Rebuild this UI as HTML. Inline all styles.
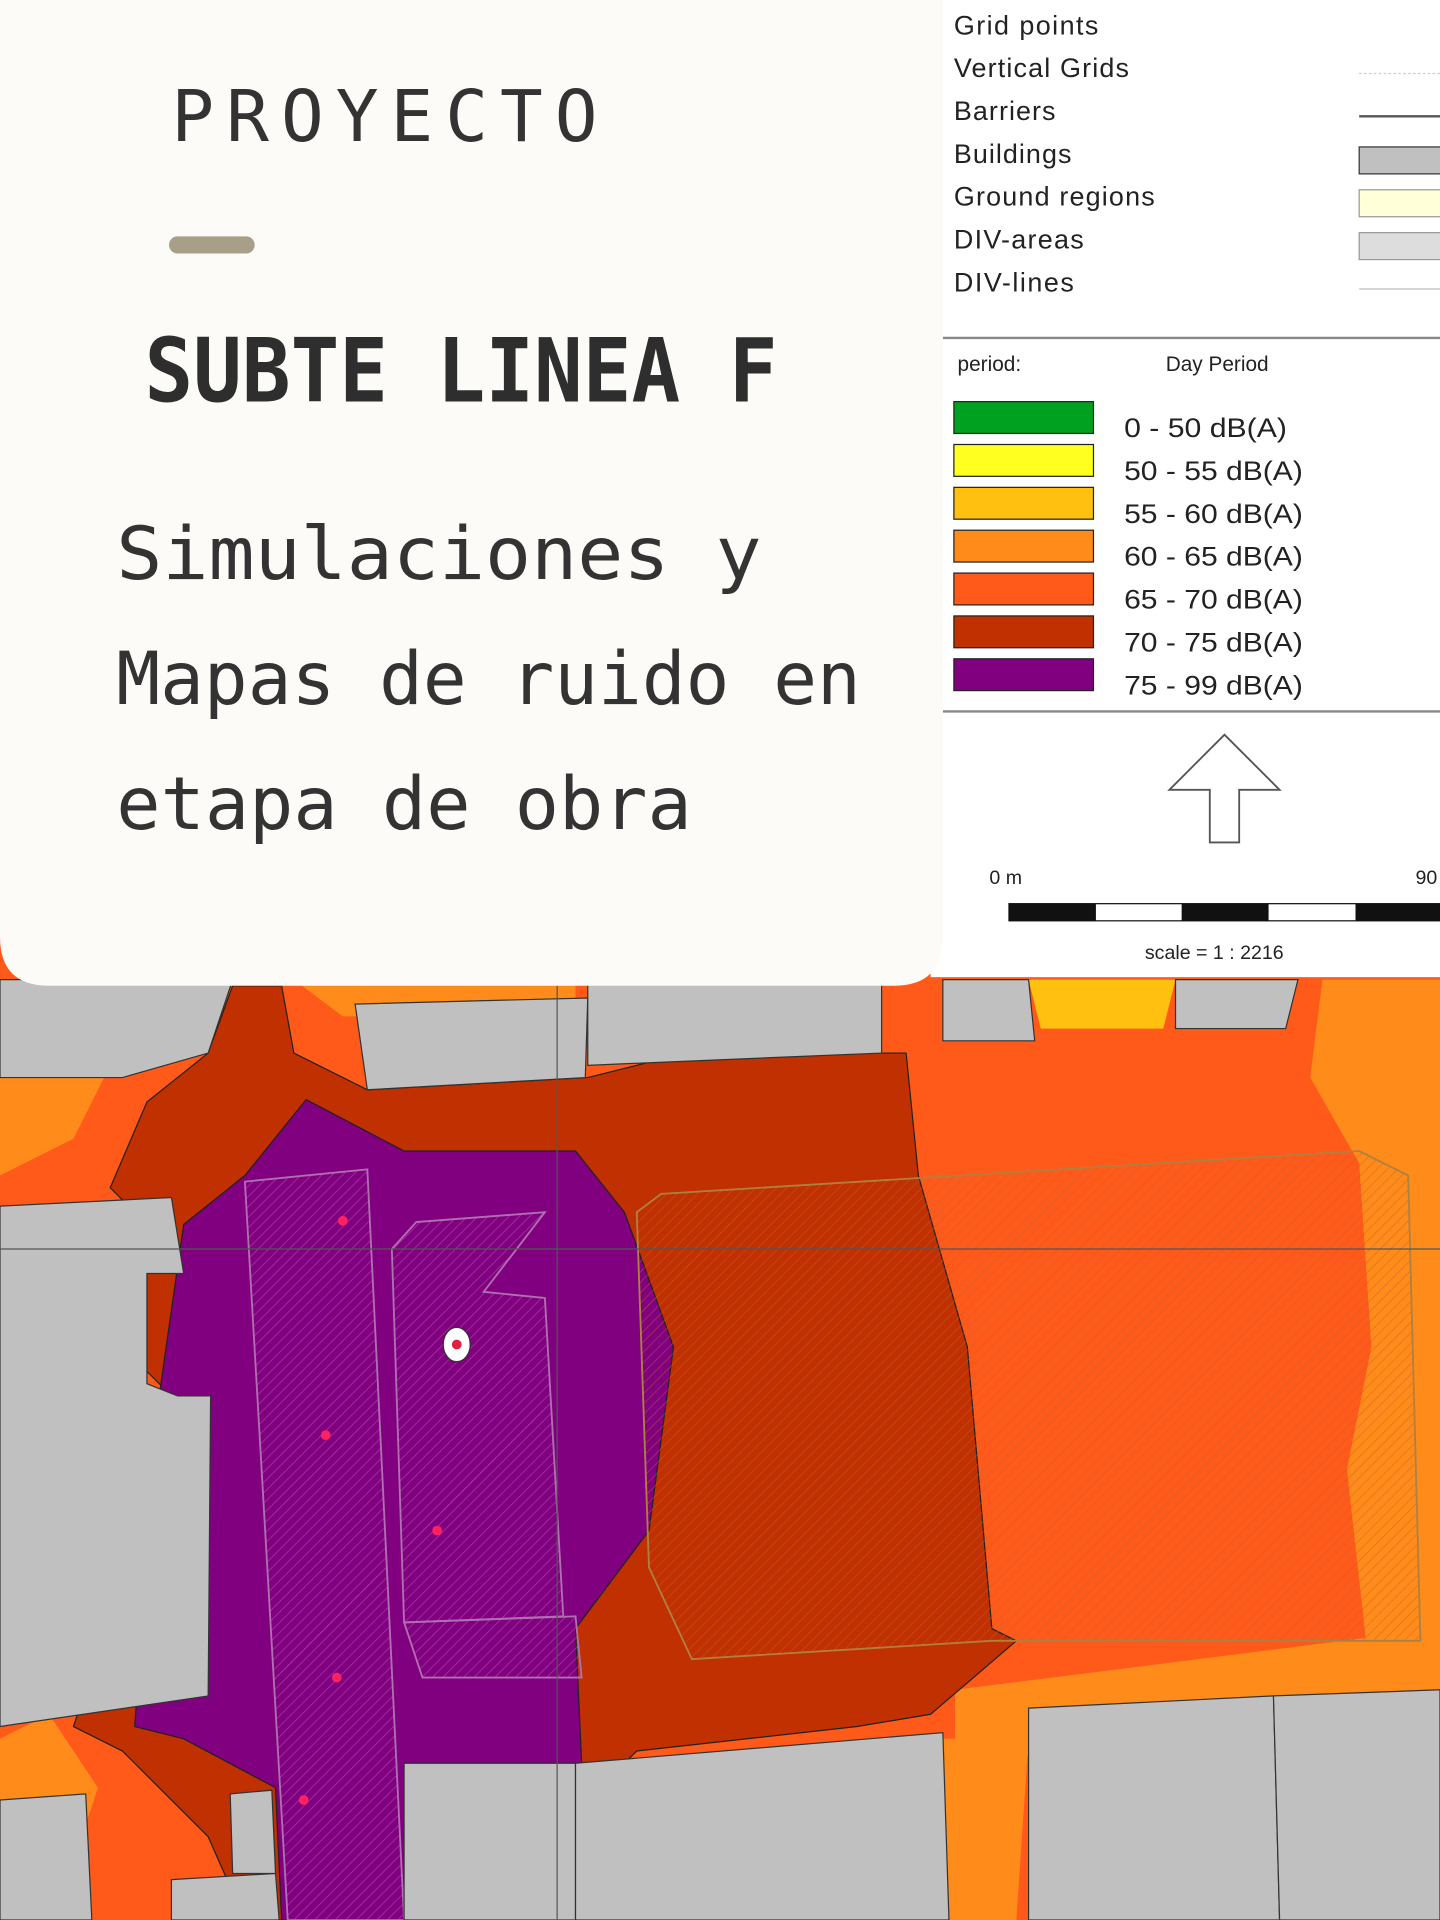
<!DOCTYPE html>
<html><head><meta charset="utf-8"><style>
html,body{margin:0;padding:0;width:1440px;height:1920px;overflow:hidden;background:#c0c0c0}
svg{display:block}
</style></head><body>
<svg width="1440" height="1920" viewBox="0 0 1176 1568" xmlns="http://www.w3.org/2000/svg">
<defs>
<pattern id="h" width="6" height="6" patternUnits="userSpaceOnUse" patternTransform="rotate(45)"><line x1="0" y1="0" x2="0" y2="6" stroke="#c06030" stroke-width="1.2" opacity="0.6"/></pattern>
<pattern id="hp" width="6" height="6" patternUnits="userSpaceOnUse" patternTransform="rotate(45)"><line x1="0" y1="0" x2="0" y2="6" stroke="#c060c0" stroke-width="1.2" opacity="0.6"/></pattern>
</defs>
<rect width="1176" height="1568" fill="#ff5a1a"/>
<polygon points="0,880 90,870 60,930 0,960" fill="#ff8c1a"/>
<polygon points="1080,800 1176,800 1176,1400 1120,1380 1100,1200 1120,1100 1110,950 1070,880" fill="#ff8c1a"/>
<polygon points="0,1420 40,1400 80,1460 60,1520 0,1520" fill="#ff8c1a"/>
<polygon points="770,1420 840,1420 830,1568 770,1568" fill="#ff8c1a"/>
<polygon points="240,800 470,800 470,830 280,830" fill="#ff8c1a"/>
<polygon points="840,800 960,800 950,840 850,840" fill="#ffc010"/>
<polygon points="780,1380 1176,1330 1176,1400 780,1440" fill="#ff8c1a"/>
<polygon points="190,805 230,805 240,860 300,890 480,880 560,860 740,860 750,960 790,1100 810,1330 830,1340 760,1400 700,1410 520,1430 480,1470 470,1568 200,1568 170,1500 100,1430 60,1410 70,1380 120,1380 140,1140 120,1120 120,1040 100,980 90,970 120,900 170,860" fill="#c03000" stroke="#222" stroke-width="1"/>
<polygon points="250,898 330,940 470,940 510,990 550,1100 530,1250 470,1330 475,1440 330,1440 330,1568 230,1568 225,1460 150,1420 110,1410 130,1140 150,1000 200,960" fill="#800080" stroke="#222" stroke-width="1"/>
<polygon points="200,965 300,955 330,1568 235,1568" fill="url(#hp)" stroke="#b070b0" stroke-width="1.5"/>
<polygon points="320,1020 340,998 445,990 395,1055 445,1060 460,1320 330,1325" fill="url(#hp)" stroke="#b070b0" stroke-width="1.5"/>
<polygon points="330,1325 470,1320 475,1370 345,1370" fill="url(#hp)" stroke="#b070b0" stroke-width="1.5"/>
<polygon points="520,990 540,975 1110,940 1150,960 1160,1340 810,1340 565,1355 530,1280" fill="url(#h)" stroke="#b08040" stroke-width="1.5"/>
<g fill="#c0c0c0" stroke="#333" stroke-width="1">
<polygon points="0,800 190,800 170,860 100,880 0,880"/>
<polygon points="290,820 480,815 478,880 300,890"/>
<polygon points="480,800 720,800 720,860 480,870"/>
<polygon points="770,800 840,800 845,850 770,850"/>
<polygon points="960,800 1060,800 1050,840 960,840"/>
<polygon points="0,985 140,978 150,1040 120,1040 120,1130 145,1140 172,1140 170,1385 0,1410"/>
<polygon points="0,1470 70,1465 75,1568 0,1568"/>
<polygon points="330,1440 470,1440 470,1568 330,1568"/>
<polygon points="470,1440 770,1415 775,1568 470,1568"/>
<polygon points="840,1395 1040,1385 1045,1568 840,1568"/>
<polygon points="1040,1385 1176,1380 1176,1568 1045,1568"/>
<polygon points="188,1465 222,1462 225,1530 190,1530"/>
<polygon points="140,1535 225,1530 228,1568 140,1568"/>
</g>
<line x1="0" y1="1020" x2="1176" y2="1020" stroke="#555" stroke-width="1"/>
<line x1="455" y1="800" x2="455" y2="1568" stroke="#555" stroke-width="1"/>
<g fill="#ff2060"><circle cx="280" cy="997" r="4"/><circle cx="266" cy="1172" r="4"/><circle cx="357" cy="1250" r="4"/><circle cx="275" cy="1370" r="4"/><circle cx="248" cy="1470" r="4"/></g>
<ellipse cx="373" cy="1098" rx="11" ry="14" fill="#fff" stroke="#333"/><circle cx="373" cy="1098" r="4" fill="#e02040"/>
<rect x="760" y="0" width="416" height="798" fill="#fff"/>
<g font-family="Liberation Sans, sans-serif" font-size="22" fill="#222" lengthAdjust="spacingAndGlyphs">
<text x="779" y="28" textLength="118">Grid points</text><text x="779" y="63" textLength="143">Vertical Grids</text><text x="779" y="98" textLength="83">Barriers</text><text x="779" y="133" textLength="96">Buildings</text><text x="779" y="168" textLength="164">Ground regions</text><text x="779" y="203" textLength="106">DIV-areas</text><text x="779" y="238" textLength="98">DIV-lines</text>
</g>
<line x1="1110" y1="95" x2="1176" y2="95" stroke="#555" stroke-width="2"/>
<rect x="1110" y="120" width="70" height="22" fill="#c0c0c0" stroke="#333"/>
<rect x="1110" y="155" width="70" height="22" fill="#ffffd8" stroke="#999"/>
<rect x="1110" y="190" width="70" height="22" fill="#ddd" stroke="#999"/>
<line x1="1110" y1="236" x2="1176" y2="236" stroke="#bbb"/>
<line x1="1110" y1="60" x2="1176" y2="60" stroke="#ccc" stroke-dasharray="2,2"/>
<line x1="770" y1="276" x2="1176" y2="276" stroke="#888" stroke-width="2"/>
<text x="782" y="303" font-family="Liberation Sans, sans-serif" font-size="17" fill="#222">period:</text>
<text x="952" y="303" font-family="Liberation Sans, sans-serif" font-size="17" fill="#222">Day Period</text>
<g stroke="#222" stroke-width="1">
<rect x="779" y="328" width="114" height="26" fill="#00a020"/>
<rect x="779" y="363" width="114" height="26" fill="#ffff20"/>
<rect x="779" y="398" width="114" height="26" fill="#ffc010"/>
<rect x="779" y="433" width="114" height="26" fill="#ff8c1a"/>
<rect x="779" y="468" width="114" height="26" fill="#ff5a1a"/>
<rect x="779" y="503" width="114" height="26" fill="#c03000"/>
<rect x="779" y="538" width="114" height="26" fill="#800080"/>
</g>
<g font-family="Liberation Sans, sans-serif" font-size="22" fill="#222">
<text x="918" y="357" textLength="133" lengthAdjust="spacingAndGlyphs">0 - 50 dB(A)</text><text x="918" y="392" textLength="146" lengthAdjust="spacingAndGlyphs">50 - 55 dB(A)</text><text x="918" y="427" textLength="146" lengthAdjust="spacingAndGlyphs">55 - 60 dB(A)</text><text x="918" y="462" textLength="146" lengthAdjust="spacingAndGlyphs">60 - 65 dB(A)</text><text x="918" y="497" textLength="146" lengthAdjust="spacingAndGlyphs">65 - 70 dB(A)</text><text x="918" y="532" textLength="146" lengthAdjust="spacingAndGlyphs">70 - 75 dB(A)</text><text x="918" y="567" textLength="146" lengthAdjust="spacingAndGlyphs">75 - 99 dB(A)</text>
</g>
<line x1="770" y1="581" x2="1176" y2="581" stroke="#888" stroke-width="2"/>
<polygon points="1000,600 1045,645 1012,645 1012,688 988,688 988,645 955,645" fill="#fff" stroke="#555" stroke-width="1.5"/>
<text x="808" y="722" font-family="Liberation Sans, sans-serif" font-size="16" fill="#222">0 m</text>
<text x="1156" y="722" font-family="Liberation Sans, sans-serif" font-size="16" fill="#222">90</text>
<rect x="824" y="738" width="352" height="14" fill="#fff" stroke="#111"/>
<g fill="#111"><rect x="824" y="738" width="71" height="14"/><rect x="965" y="738" width="71" height="14"/><rect x="1107" y="738" width="71" height="14"/></g>
<text x="935" y="783" font-family="Liberation Sans, sans-serif" font-size="16" fill="#222">scale = 1 : 2216</text>
<path d="M0,0 H770 V765 Q770,805 730,805 H40 Q0,805 0,765 Z" fill="#fdfbf7"/>
<g font-family="DejaVu Sans Mono, Liberation Mono, monospace" fill="#333">
<text x="140" y="115" font-size="58" textLength="348" lengthAdjust="spacing">PROYECTO</text>
<text x="118" y="328" font-size="72" font-weight="bold" fill="#2e2e2e" textLength="517" lengthAdjust="spacingAndGlyphs">SUBTE LINEA F</text>
<text x="95" y="473" font-size="60" textLength="527" lengthAdjust="spacingAndGlyphs">Simulaciones y</text>
<text x="95" y="575" font-size="60" textLength="608" lengthAdjust="spacingAndGlyphs">Mapas de ruido en</text>
<text x="95" y="677" font-size="60" textLength="470" lengthAdjust="spacingAndGlyphs">etapa de obra</text>
</g>
<rect x="138" y="193" width="70" height="14" rx="7" fill="#a89f88"/>
</svg>
</body></html>
